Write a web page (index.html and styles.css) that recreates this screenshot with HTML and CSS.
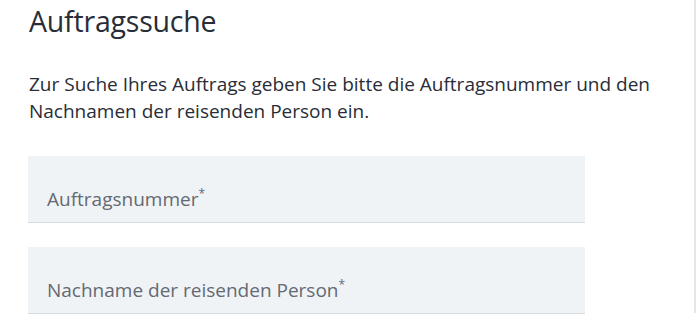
FILE: index.html
```html
<!DOCTYPE html>
<html lang="de">
<head>
<meta charset="utf-8">
<title>Auftragssuche</title>
<link rel="stylesheet" href="styles.css">
</head>
<body>
<div class="page">
  <main class="content">
    <h1 class="title">Auftragssuche</h1>
    <p class="intro">Zur Suche Ihres Auftrags geben Sie bitte die Auftragsnummer und den Nachnamen der reisenden Person ein.</p>
    <div class="field">
      <span class="label">Auftragsnummer<sup>*</sup></span>
    </div>
    <div class="field">
      <span class="label">Nachname der reisenden Person<sup>*</sup></span>
    </div>
  </main>
  <div class="scrollbar"></div>
</div>
</body>
</html>
```

FILE: styles.css
```css
html, body {
  margin: 0;
  padding: 0;
  background: #ffffff;
}
body {
  font-family: "Open Sans", "Noto Sans", sans-serif;
  color: #282d37;
  overflow: hidden;
}
.page {
  display: flex;
  height: 318px;
}
.content {
  flex: 1;
  padding: 0 0 0 29px;
}
.title {
  margin: 0;
  padding-top: 2px;
  font-size: 28.5px;
  line-height: 38px;
  font-weight: 400;
  letter-spacing: -0.2px;
}
.intro {
  margin: 31px 0 0 0;
  width: 650px;
  font-size: 19px;
  line-height: 27px;
}
.field {
  box-sizing: border-box;
  width: 557px;
  height: 67px;
  margin: 31px 0 0 -1px;
  background: #f0f3f5;
  border-bottom: 1px solid #d7dce1;
  padding: 31px 0 0 19px;
  color: #646973;
  font-size: 19px;
  line-height: 24px;
}
.field + .field {
  margin-top: 24px;
}
.label sup {
  font-size: 12px;
  vertical-align: top;
  line-height: 14px;
}
.scrollbar {
  width: 2px;
  margin-right: 1px;
  height: 313px;
  background: #e6e6e6;
}
```
